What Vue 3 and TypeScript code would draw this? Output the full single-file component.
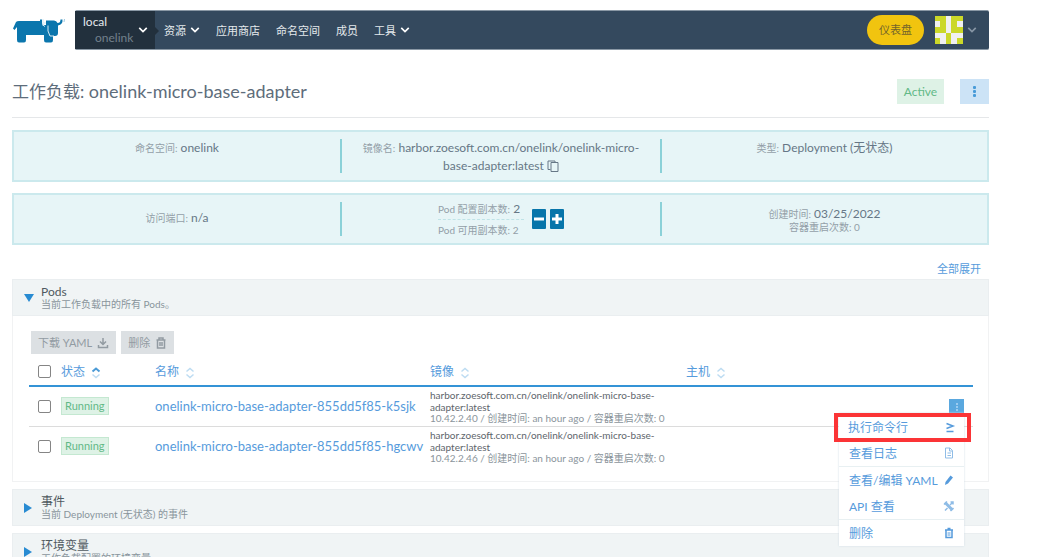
<script setup lang="ts">
import { ref } from 'vue'

interface Pod { name: string; ip: string }

const pods: Pod[] = [
  { name: 'onelink-micro-base-adapter-855dd5f85-k5sjk', ip: '10.42.2.40' },
  { name: 'onelink-micro-base-adapter-855dd5f85-hgcwv', ip: '10.42.2.46' },
]
const columns = ['状态', '名称', '镜像', '主机']
const sections = [
  { title: '事件', note: '当前 Deployment (无状态) 的事件' },
  { title: '环境变量', note: '工作负载配置的环境变量' },
]
const avatarCells = [1, 1, 0, 1, 1, 0, 1, 0, 1, 0, 1, 1, 0, 1, 1, 0, 0, 1, 0, 0, 1, 0, 1, 0, 1]
const menuOpen = ref(0)
const allChecked = ref(false)
const checked = ref<boolean[]>([false, false])
</script>

<template>
  <div class="page">
    <header class="top">
      <a href="#" class="logo" aria-label="Rancher">
        <svg viewBox="0 0 54 26" width="54" height="26">
          <path fill="#0b76ad" d="M4 3 Q5 2 7 2 H28 V0.500 H30 V4 Q30 6 32 6 H34 V1.500 H42 Q44.500 1.500 45.500 4 Q48.500 4 48.500 0.500 H50.500 Q51 5.500 46 6.500 V14 Q46 17 43 17 H41 V21 Q41 23.500 39 23.500 H34 Q32 23.500 32 21 V16 H14 V21 Q14 23.500 12 23.500 H7 Q5 23.500 5 21 V8 L2.500 11 L1 9.500 Z" />
          <path fill="none" stroke="#d8eaf3" stroke-width="1" d="M31 0 V4 H34 M30 5.500 L33 7.500 M36 6.500 V12 L38 17 H42" />
          <path fill="none" stroke="#9cc8df" stroke-width="1" d="M52.500 0 L52 3" />
        </svg>
      </a>
      <nav class="bar">
        <button class="cluster">
          <span class="names"><span>local</span><span class="project">onelink</span></span>
          <svg class="chev" viewBox="0 0 12 8" width="10" height="8"><path d="M1.500 1.500 L6 6 L10.500 1.500" /></svg>
        </button>
        <a href="#" class="item">资源 <svg class="chev" viewBox="0 0 12 8" width="10" height="8"><path d="M1.500 1.500 L6 6 L10.500 1.500" /></svg></a>
        <a href="#" class="item">应用商店</a>
        <a href="#" class="item">命名空间</a>
        <a href="#" class="item">成员</a>
        <a href="#" class="item">工具 <svg class="chev" viewBox="0 0 12 8" width="10" height="8"><path d="M1.500 1.500 L6 6 L10.500 1.500" /></svg></a>
        <a href="#" class="dashboard">仪表盘</a>
        <button class="user" aria-label="User">
          <span class="avatar"><i v-for="(c, i) in avatarCells" :key="i" :class="{ on: c }"></i></span>
          <svg class="chev thin" viewBox="0 0 12 8" width="10" height="8"><path d="M1.500 1.500 L6 6 L10.500 1.500" /></svg>
        </button>
      </nav>
    </header>

    <section class="heading">
      <h1><span>工作负载:</span> onelink-micro-base-adapter</h1>
      <span class="active">Active</span>
      <button class="more" aria-label="Actions"><i></i><i></i><i></i></button>
    </section>

    <section class="banner">
      <div class="cell"><span class="key">命名空间:</span> onelink</div>
      <div class="cell"><span class="key">镜像名:</span> harbor.zoesoft.com.cn/onelink/onelink-micro-<br>base-adapter:latest
        <svg class="copy" viewBox="0 0 12 12" width="12" height="12"><path d="M4 2.500 H11 V11.500 H4 Z M3.500 9.500 H1 V1 H8 V2" /></svg>
      </div>
      <div class="cell"><span class="key">类型:</span> Deployment (无状态)</div>
    </section>
    <section class="banner second">
      <div class="cell"><span class="key">访问端口:</span> n/a</div>
      <div class="cell scale">
        <div class="counts">
          <div><span class="key">Pod 配置副本数:</span> 2</div>
          <div class="small">Pod 可用副本数: 2</div>
        </div>
        <div class="steps">
          <button aria-label="Decrease"><svg viewBox="0 0 14 20" width="14" height="20"><path d="M2 10 H12" /></svg></button>
          <button aria-label="Increase"><svg viewBox="0 0 14 20" width="14" height="20"><path d="M2 10 H12 M7 5 V15" /></svg></button>
        </div>
      </div>
      <div class="cell created"><div><span class="key">创建时间:</span> 03/25/2022</div><div class="small">容器重启次数: 0</div></div>
    </section>

    <div class="expand"><a href="#">全部展开</a></div>

    <section class="panel">
      <button class="panel-head"><span class="tri down"></span><span class="titles"><b>Pods</b><small>当前工作负载中的所有 Pods。</small></span></button>
      <div class="panel-body">
        <div class="bulk">
          <button disabled>下载 YAML <svg viewBox="0 0 12 12" width="12" height="12"><path d="M6 1 V7 M3 4.500 L6 7.500 L9 4.500 M1.500 8 V10.500 H10.500 V8" /></svg></button>
          <button disabled>删除 <svg viewBox="0 0 12 12" width="12" height="12"><path d="M1.500 3 H10.500 M4 2.500 V1 H8 V2.500 M2.500 3 V11 H9.500 V3 M5 5 V9 M7 5 V9" /></svg></button>
        </div>
        <table>
          <colgroup><col class="c-check"><col class="c-state"><col class="c-name"><col class="c-image"><col><col class="c-act"></colgroup>
          <thead>
            <tr>
              <th><input v-model="allChecked" type="checkbox" aria-label="全选"></th>
              <th v-for="(c, i) in columns" :key="c">{{ c }}
                <svg class="sort" viewBox="0 0 10 12" width="10" height="12"><path :class="{ hot: i === 0 }" d="M1.500 4.500 L5 1.500 L8.500 4.500" /><path d="M1.500 7.500 L5 10.500 L8.500 7.500" /></svg>
              </th>
              <th></th>
            </tr>
          </thead>
          <tbody>
            <tr v-for="(p, i) in pods" :key="p.name">
              <td><input v-model="checked[i]" type="checkbox" :aria-label="p.name"></td>
              <td><span class="running">Running</span></td>
              <td><a href="#">{{ p.name }}</a></td>
              <td class="image"><div>harbor.zoesoft.com.cn/onelink/onelink-micro-base-<br>adapter:latest</div><div class="meta">{{ p.ip }} / 创建时间: an hour ago / 容器重启次数: 0</div></td>
              <td></td>
              <td>
                <button v-if="i === menuOpen" class="row-more" aria-label="Actions"><i></i><i></i><i></i></button>
                <div v-if="i === menuOpen" class="menu">
                  <button class="marked">执行命令行 <svg viewBox="0 0 12 12" width="12" height="12"><path class="mid" d="M2.500 1.500 L9 4 L2.500 6.500 M2.500 9.500 H9.500" /></svg></button>
                  <button>查看日志 <svg class="pale" viewBox="0 0 12 12" width="12" height="12"><path d="M2.500 1 H7 L9.500 3.500 V11 H2.500 Z M6.500 1 V4 H9.500 M4.500 6 H8 M4.500 8.500 H8" /></svg></button>
                  <hr>
                  <button>查看/编辑 YAML <svg viewBox="0 0 12 12" width="12" height="12"><path class="fill" d="M2.500 8 L7.500 1.500 L10 3.500 L5 9.500 L2 11 Z" /></svg></button>
                  <button>API 查看 <svg class="pale" viewBox="0 0 12 12" width="12" height="12"><path class="bold" d="M2 2.500 L9.500 10" /><path class="mid" d="M1 4.500 L4 1.500 M7.500 11 L10.500 8 M2 10.500 L4.500 8 M7 5 L10 2 M7.500 2 H10 V4.500" /></svg></button>
                  <hr>
                  <button>删除 <svg viewBox="0 0 12 12" width="12" height="12"><path class="mid" d="M2 3 H10 M4.500 1.500 H7.500 M3 3 V10.500 H9 V3" /><path d="M4.500 6 H7.500 M4.500 8 H7.500" /></svg></button>
                </div>
              </td>
            </tr>
          </tbody>
        </table>
      </div>
    </section>

    <section v-for="s in sections" :key="s.title" class="panel">
      <button class="panel-head"><span class="tri right"></span><span class="titles"><b>{{ s.title }}</b><small>{{ s.note }}</small></span></button>
    </section>
  </div>
</template>

<style>
html, body { background: #fff; overflow: hidden; }
</style>

<style scoped>
* { box-sizing: border-box; }
.page { height: 100vh; overflow: hidden; padding: 10px 71px 0 12px; font: 13px/17px Lato, "Noto Sans CJK SC", sans-serif; color: #667786; }
button { font: inherit; color: inherit; border: 0; padding: 0; background: none; }
a { color: #569bdc; text-decoration: none; }
svg { fill: none; stroke: currentColor; stroke-width: 1; flex: none; }
.top { display: flex; height: 40px; }
.logo { width: 63px; padding-top: 9px; }
.logo svg { stroke: none; }
.bar { flex: 1; display: flex; align-items: center; background: #34495e; border-radius: 2px; color: #e5e9ed; font-size: 11px; border-top: 1px solid #8a98a5; border-bottom: 1px solid #8a98a5; }
.cluster { position: relative; width: 80px; height: 38px; background: #22303d; display: flex; align-items: center; padding-left: 8px; gap: 7px; text-align: left; font-size: 12px; line-height: 16px; }
.cluster::after { content: ""; position: absolute; left: 80px; top: 16px; border: 4px solid transparent; border-left-color: #22303d; border-right: 0; }
.names span { display: block; }
.names .project { padding-left: 12px; color: #72808c; }
.names { width: 48px; }
.chev { stroke: #fff; stroke-width: 2; }
.chev.thin { stroke: #8796a5; }
.item { color: #e5e9ed; display: flex; align-items: center; gap: 4px; margin-left: 16px; }
.cluster + .item { margin-left: 9px; }
.dashboard { margin-left: auto; background: #f1c40f; color: #74642b; width: 57px; height: 30px; line-height: 29px; border-radius: 15px; text-align: center; }
.user { display: flex; align-items: center; gap: 4px; margin: 0 12px 0 11px; }
.avatar { display: grid; grid-template-columns: 5px 6px 5px 6px 6px; grid-template-rows: 5px 6px 6px 5px 6px; width: 28px; height: 28px; background: #f0f0f0; }
.avatar .on { background: #cbd829; }
.heading { display: flex; align-items: center; height: 68px; border-bottom: 1px solid #e5e7e9; padding-top: 16px; margin-bottom: 12px; }
h1 { flex: 1; margin: 0; font-size: 18px; font-weight: 400; line-height: 24px; color: #5e6d7b; }
h1 span { font-size: 17px; }
.active { background: #def2e6; color: #62b986; width: 47px; height: 25px; line-height: 25px; text-align: center; margin-right: 16px; font-size: 12px; }
.more { width: 29px; height: 25px; background: #cce3f6; display: flex; flex-direction: column; gap: 1px; align-items: center; justify-content: center; }
.more i { width: 3px; height: 3px; background: #489bd8; border-radius: 1px; }
.banner { display: grid; grid-template-columns: 328px 320px 1fr; grid-template-rows: minmax(0, 1fr); height: 52px; background: #e7f5f7; border: 2px solid #cbe9ed; padding: 7px 0; margin-bottom: 11px; font-size: 12px; }
.cell { text-align: center; border-right: 2px solid #8bd1d8; }
.cell:last-child { border: 0; }
.key, .small { color: #939fa8; font-size: 10px; }
.copy { vertical-align: -2px; }
.second .cell:first-child { padding-top: 7px; }
.scale { display: flex; justify-content: center; align-items: center; gap: 8px; }
.counts { line-height: 20px; text-align: left; width: 86px; }
.counts div:first-child { border-bottom: 1px dashed #bfe3e7; }
.steps { display: flex; gap: 4px; }
.steps button { background: #0775aa; color: #fff; height: 20px; width: 14px; border-radius: 1px; }
.steps svg { stroke-width: 3; display: block; }
.created { padding-top: 5px; line-height: 13px; }
.expand { text-align: right; padding: 4px 8px 0 0; height: 23px; font-size: 11px; }
.panel { margin-bottom: 7px; }
.panel-head { width: 100%; display: flex; align-items: center; height: 37px; background: #f0f4f5; border: 1px solid #eaeef0; text-align: left; padding-left: 11px; }
.tri { width: 17px; }
.tri::before { content: ""; display: block; width: 0; border: 5px solid transparent; }
.tri.down::before { border-width: 8px 5px 0; border-top-color: #288bd2; }
.tri.right::before { border-width: 5px 0 5px 8px; border-left-color: #288bd2; }
.titles b { display: block; font-weight: 400; font-size: 12px; line-height: 13px; color: #4f5960; }
.titles small { display: block; font-size: 10px; line-height: 12px; color: #89949c; }
.panel-body { border: 1px solid #f1f2f3; border-top: 0; padding: 15px 15px 15px 16px; }
.bulk { display: flex; gap: 5px; padding-left: 2px; margin-bottom: 3px; }
.bulk button { background: #dce0e3; color: #929ba2; height: 23px; padding: 0 7px; display: flex; align-items: center; gap: 5px; font-size: 11px; }
.bulk path { stroke-width: 1.5; }
table { width: 100%; border-collapse: collapse; table-layout: fixed; }
.c-check { width: 32px; }
.c-state { width: 94px; }
.c-name { width: 275px; }
.c-image { width: 256px; }
.c-act { width: 32px; }
th { height: 29px; text-align: left; font-weight: 400; font-size: 12px; color: #569bdc; padding: 0; }
th .sort { margin-left: 3px; vertical-align: -3px; color: #bddcf2; stroke-width: 1.5; }
.sort .hot { stroke: #4c9bd6; stroke-width: 2; }
thead tr { border-bottom: 2px solid #3493d6; }
tbody tr { height: 40px; }
tbody tr + tr { border-top: 1px solid #dcdcdc; }
td { padding: 0; position: relative; }
td:first-child, th:first-child { padding-left: 9px; }
input { appearance: none; display: block; width: 13px; height: 13px; margin: 0; border: 1px solid #858585; border-radius: 2px; background: #fff; }
.running { display: inline-block; background: #def2e6; border: 1px solid #c4e8d1; color: #62b986; font-size: 11px; line-height: 16px; padding: 0 3px; }
.image { font-size: 10px; line-height: 12px; color: #5d656b; white-space: nowrap; }
.meta { color: #8b959c; line-height: 10px; }
.row-more { position: absolute; right: 9px; top: 12px; width: 15px; height: 15px; background: #5aa8df; }
.row-more i { display: block; width: 2px; height: 2px; margin: 1px auto; background: #9bcbf0; }
.menu { position: absolute; z-index: 2; right: 9px; top: 26px; width: 125px; background: #fff; box-shadow: 0 0 2px #cfdde5; }
.menu button { width: 100%; height: 26px; display: flex; align-items: center; justify-content: space-between; padding: 0 9px 0 10px; color: #569bdc; font-size: 12px; }
.menu .marked { position: relative; width: 137px; height: 29px; margin: 0 -7px -2px -5px; padding: 0 11px 0 10px; border: 4px solid #fb3436; }
.menu hr { border: 0; border-top: 1px solid #e8f0f2; margin: 0; }
.menu .mid { stroke-width: 1.5; }
.menu .bold { stroke-width: 3; }
.menu .pale { color: #8fbce6; }
.menu .fill { fill: currentColor; stroke: none; }
</style>
